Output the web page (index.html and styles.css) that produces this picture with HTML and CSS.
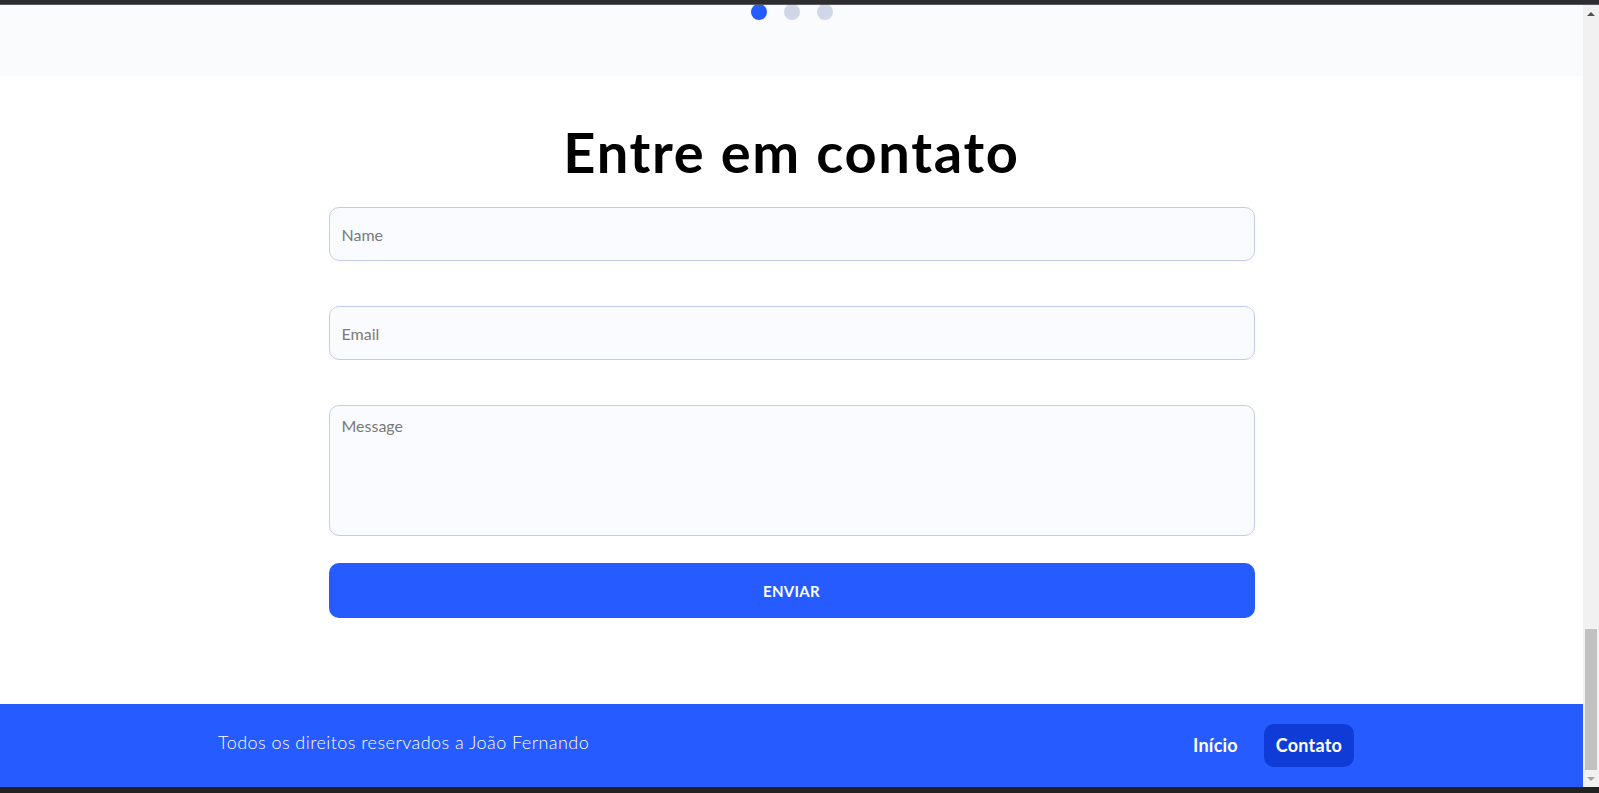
FILE: index.html
```html
<!DOCTYPE html>
<html lang="pt-BR">
<head>
<meta charset="utf-8">
<title>Entre em contato</title>
<link rel="stylesheet" href="styles.css">
</head>
<body>
<div class="window">
  <div class="topbar"></div>
  <div class="viewport">
    <main class="page">
      <section class="carousel-tail">
        <div class="dots">
          <span class="dot dot-active"></span>
          <span class="dot"></span>
          <span class="dot"></span>
        </div>
      </section>
      <section class="contact">
        <h1 class="contact-title">Entre em contato</h1>
        <form class="contact-form">
          <input class="field" type="text" placeholder="Name">
          <input class="field" type="email" placeholder="Email">
          <textarea class="field field-message" placeholder="Message"></textarea>
          <button class="submit" type="button">ENVIAR</button>
        </form>
      </section>
      <footer class="footer">
        <p class="footer-copy">Todos os direitos reservados a João Fernando</p>
        <nav class="footer-nav">
          <a class="footer-link" href="#">Início</a>
          <a class="footer-link footer-link-active" href="#">Contato</a>
        </nav>
      </footer>
    </main>
    <div class="scrollbar">
      <div class="scroll-btn"><span class="arrow arrow-up"></span></div>
      <div class="scroll-track"><div class="scroll-thumb"></div></div>
      <div class="scroll-btn"><span class="arrow arrow-down"></span></div>
    </div>
  </div>
  <div class="bottombar"></div>
</div>
</body>
</html>
```
FILE: styles.css
```css
* { box-sizing: border-box; }

html, body {
  margin: 0;
  padding: 0;
  height: 100%;
  overflow: hidden;
}

body {
  font-family: "Lato", "Liberation Sans", sans-serif;
  background: #ffffff;
  color: #000;
}

.window {
  display: flex;
  flex-direction: column;
  height: 793px;
}

.topbar {
  height: 5px;
  flex: none;
  background: #2e2e30;
  border-bottom: 1px solid #56575a;
}

.bottombar {
  height: 6px;
  flex: none;
  background: #222222;
}

.viewport {
  flex: 1;
  display: flex;
  min-height: 0;
}

.page {
  flex: 1;
  display: flex;
  flex-direction: column;
  min-width: 0;
}

/* carousel remainder */
.carousel-tail {
  height: 71px;
  flex: none;
  background: #fafbfd;
  overflow: hidden;
}

.dots {
  display: flex;
  justify-content: center;
  gap: 17px;
  margin-top: -1px;
}

.dot {
  width: 16px;
  height: 16px;
  border-radius: 50%;
  background: #d0d7e8;
}

.dot-active {
  background: #255bff;
}

/* contact */
.contact {
  flex: 1;
  display: flex;
  flex-direction: column;
  align-items: center;
  padding-top: 42px;
}

.contact-title {
  margin: 0;
  font-size: 56px;
  line-height: 67px;
  font-weight: 700;
  letter-spacing: 1.7px;
  color: #000;
}

.contact-form {
  width: 926px;
  margin-top: 22px;
  display: flex;
  flex-direction: column;
}

.field {
  display: block;
  width: 100%;
  height: 54px;
  margin: 0 0 45px;
  padding: 0 12px;
  border: 1px solid #c3cbed;
  border-radius: 10px;
  background: #fafbfe;
  font-family: "Lato", "Liberation Sans", sans-serif;
  font-size: 16px;
  color: #333;
  outline: none;
}

.field::placeholder {
  color: #7a7a7a;
}

.field-message {
  height: 131px;
  margin-bottom: 27px;
  padding: 10px 12px;
  resize: none;
  line-height: 19px;
}

.submit {
  height: 55px;
  width: 100%;
  border: none;
  border-radius: 10px;
  background: #255bff;
  color: #ffffff;
  font-family: "Lato", "Liberation Sans", sans-serif;
  font-size: 15px;
  font-weight: 700;
  letter-spacing: 0.3px;
  cursor: pointer;
}

/* footer */
.footer {
  height: 83px;
  flex: none;
  background: #255bff;
  display: flex;
  align-items: center;
  justify-content: space-between;
  padding: 0 229px 0 218px;
}

.footer-copy {
  margin: 0 0 8px;
  color: #ffffff;
  font-size: 18px;
  font-weight: 300;
  letter-spacing: 0.45px;
}

.footer-nav {
  display: flex;
  align-items: center;
  gap: 14px;
}

.footer-link {
  display: block;
  padding: 0 12px;
  height: 43px;
  line-height: 43px;
  border-radius: 10px;
  color: #ffffff;
  font-size: 18px;
  font-weight: 700;
  letter-spacing: 0.2px;
  text-decoration: none;
}

.footer-link-active {
  background: #0f3cd6;
}

/* fake scrollbar */
.scrollbar {
  width: 16px;
  flex: none;
  background: #f1f1f1;
  display: flex;
  flex-direction: column;
}

.scroll-btn {
  height: 17px;
  flex: none;
  display: flex;
  align-items: center;
  justify-content: center;
}

.arrow {
  width: 0;
  height: 0;
  border-left: 4px solid transparent;
  border-right: 4px solid transparent;
}

.arrow-up {
  border-bottom: 4px solid #505050;
}

.arrow-down {
  border-top: 4px solid #a3a3a3;
}

.scroll-track {
  flex: 1;
  display: flex;
  flex-direction: column;
  justify-content: flex-end;
  padding: 0 2px;
}

.scroll-thumb {
  height: 141px;
  background: #c1c1c1;
}
```
